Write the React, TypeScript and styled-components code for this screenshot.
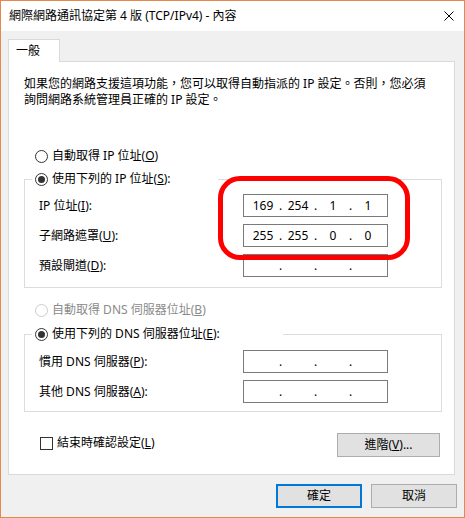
import React from 'react';
import styled, { createGlobalStyle } from 'styled-components';

const GlobalStyle = createGlobalStyle`
  html, body {
    margin: 0;
    padding: 0;
  }
  body {
    font-family: "Noto Sans", "Noto Sans CJK TC", sans-serif;
    font-size: 12px;
    color: #000;
    background: #fff;
  }
`;

const Window = styled.div`
  width: 465px;
  height: 518px;
  box-sizing: border-box;
  border: 1px solid #e3894d;
  background: #f0f0f0;
  display: flex;
  flex-direction: column;
`;

const TitleBar = styled.div`
  height: 30px;
  flex-shrink: 0;
  background: #fff;
  display: flex;
  align-items: center;
  justify-content: space-between;
  padding: 0 10px 0 8px;
  line-height: 16px;
`;

const Body = styled.div`
  flex: 1;
  padding: 8px 7px 0;
`;

const TabStrip = styled.div`
  display: flex;
`;

const Tab = styled.div`
  width: 52px;
  height: 23px;
  box-sizing: border-box;
  border: 1px solid #d9d9d9;
  border-bottom: none;
  background: #fff;
  margin-bottom: -1px;
  position: relative;
  z-index: 1;
  padding-left: 7px;
  line-height: 21px;
`;

const Panel = styled.div`
  width: 447px;
  height: 414px;
  box-sizing: border-box;
  border: 1px solid #d9d9d9;
  background: #fff;
  padding: 14px 0 0 15px;
  position: relative;
  display: flex;
  flex-direction: column;
`;

const Description = styled.p`
  margin: 0;
  line-height: 16px;
  white-space: nowrap;
`;

const Radio = styled.span<{ $checked?: boolean; $disabled?: boolean }>`
  width: 13px;
  height: 13px;
  box-sizing: border-box;
  border-radius: 50%;
  border: 1px solid ${(p) => (p.$disabled ? '#cccccc' : '#333')};
  background: #fff;
  display: inline-flex;
  align-items: center;
  justify-content: center;
  flex-shrink: 0;

  &::after {
    content: '';
    width: 7px;
    height: 7px;
    border-radius: 50%;
    background: #333;
    display: ${(p) => (p.$checked ? 'block' : 'none')};
  }
`;

const OptionRow = styled.label<{ $top: number; $disabled?: boolean }>`
  display: flex;
  align-items: center;
  gap: 4px;
  height: 16px;
  line-height: 16px;
  margin: ${(p) => p.$top}px 0 0 11px;
  color: ${(p) => (p.$disabled ? '#8a8a8a' : '#000')};
  white-space: nowrap;
`;

const Group = styled.fieldset<{ $top: number }>`
  margin: ${(p) => p.$top}px 0 0 0;
  width: 418px;
  box-sizing: border-box;
  border: 1px solid #dcdcdc;
  padding: 0;
  min-width: 0;
`;

const Legend = styled.legend<{ $width: number }>`
  width: ${(p) => p.$width}px;
  box-sizing: border-box;
  margin-left: 7px;
  padding: 0 0 0 3px;
  line-height: 16px;
  height: 16px;
  display: flex;
  align-items: center;
  gap: 4px;
  white-space: nowrap;
`;

const Fields = styled.div<{ $top: number; $bottom: number }>`
  display: grid;
  grid-template-columns: 204px 145px;
  row-gap: 7px;
  align-items: center;
  padding: ${(p) => p.$top}px 0 ${(p) => p.$bottom}px 14px;
`;

const FieldLabel = styled.span`
  line-height: 16px;
  white-space: nowrap;
`;

const IpBox = styled.div`
  width: 145px;
  height: 23px;
  box-sizing: border-box;
  border: 1px solid #7a7a7a;
  display: flex;
  align-items: center;
  padding-left: 5px;
  background: #fff;
`;

const Octet = styled.span`
  width: 28px;
  text-align: center;
  line-height: 16px;
`;

const Dot = styled.span`
  width: 7px;
  text-align: center;
  line-height: 16px;
`;

const Key = styled.u`
  text-decoration: underline;
  text-underline-offset: 1px;
`;

const CheckRow = styled.div`
  display: flex;
  justify-content: space-between;
  align-items: center;
  margin-top: 21px;
  width: 418px;
  box-sizing: border-box;
  padding: 0 2px 0 16px;
`;

const CheckLabel = styled.label`
  display: flex;
  align-items: center;
  gap: 4px;
  line-height: 16px;
  margin-bottom: 4px;
  white-space: nowrap;
`;

const CheckBox = styled.span`
  width: 13px;
  height: 13px;
  box-sizing: border-box;
  border: 1px solid #333;
  background: #fff;
  flex-shrink: 0;
`;

const Button = styled.button<{ $width: number; $default?: boolean }>`
  width: ${(p) => p.$width}px;
  height: 24px;
  box-sizing: border-box;
  border: ${(p) => (p.$default ? '2px solid #0078d7' : '1px solid #adadad')};
  background: #e1e1e1;
  font: inherit;
  font-size: 12px;
  color: #000;
  padding: 0;
  line-height: 16px;
  display: flex;
  align-items: center;
  justify-content: center;
`;

const Footer = styled.div`
  display: flex;
  justify-content: flex-end;
  gap: 9px;
  padding-top: 9px;
`;

const Highlight = styled.div`
  position: absolute;
  left: 209px;
  top: 114px;
  width: 192px;
  height: 84px;
  box-sizing: border-box;
  border: 5px solid #ff0000;
  border-radius: 22px;
  pointer-events: none;
`;

const IpField = ({ value }: { value?: string[] }) => {
  const parts = value ?? ['', '', '', ''];
  return (
    <IpBox>
      {parts.map((p, i) => (
        <React.Fragment key={i}>
          {i > 0 && <Dot>.</Dot>}
          <Octet>{p}</Octet>
        </React.Fragment>
      ))}
    </IpBox>
  );
};

const CloseIcon = () => (
  <svg width="10" height="10" viewBox="0 0 10 10">
    <path d="M0.5 0.5 L9.5 9.5 M9.5 0.5 L0.5 9.5" stroke="#000" strokeWidth="1" fill="none" />
  </svg>
);

const App = () => {
  return (
    <>
      <GlobalStyle />
      <Window>
        <TitleBar>
          <span>網際網路通訊協定第 4 版 (TCP/IPv4) - 內容</span>
          <CloseIcon />
        </TitleBar>
        <Body>
          <TabStrip>
            <Tab>一般</Tab>
          </TabStrip>
          <Panel>
            <Description>
              如果您的網路支援這項功能，您可以取得自動指派的 IP 設定。否則，您必須
              <br />
              詢問網路系統管理員正確的 IP 設定。
            </Description>

            <OptionRow $top={40}>
              <Radio />
              <span>
                自動取得 IP 位址(<Key>O</Key>)
              </span>
            </OptionRow>

            <Group $top={7}>
              <Legend $width={186}>
                <Radio $checked />
                <span>
                  使用下列的 IP 位址(<Key>S</Key>):
                </span>
              </Legend>
              <Fields $top={7} $bottom={10}>
                <FieldLabel>
                  IP 位址(<Key>I</Key>):
                </FieldLabel>
                <IpField value={['169', '254', '1', '1']} />
                <FieldLabel>
                  子網路遮罩(<Key>U</Key>):
                </FieldLabel>
                <IpField value={['255', '255', '0', '0']} />
                <FieldLabel>
                  預設閘道(<Key>D</Key>):
                </FieldLabel>
                <IpField />
              </Fields>
            </Group>

            <OptionRow $top={14} $disabled>
              <Radio $disabled />
              <span>
                自動取得 DNS 伺服器位址(<Key>B</Key>)
              </span>
            </OptionRow>

            <Group $top={8}>
              <Legend $width={251}>
                <Radio $checked />
                <span>
                  使用下列的 DNS 伺服器位址(<Key>E</Key>):
                </span>
              </Legend>
              <Fields $top={8} $bottom={8}>
                <FieldLabel>
                  慣用 DNS 伺服器(<Key>P</Key>):
                </FieldLabel>
                <IpField />
                <FieldLabel>
                  其他 DNS 伺服器(<Key>A</Key>):
                </FieldLabel>
                <IpField />
              </Fields>
            </Group>

            <CheckRow>
              <CheckLabel>
                <CheckBox />
                <span>
                  結束時確認設定(<Key>L</Key>)
                </span>
              </CheckLabel>
              <Button $width={103}>
                進階(<Key>V</Key>)...
              </Button>
            </CheckRow>

            <Highlight />
          </Panel>
          <Footer>
            <Button $width={86} $default>
              確定
            </Button>
            <Button $width={86}>取消</Button>
          </Footer>
        </Body>
      </Window>
    </>
  );
};

export default App;
